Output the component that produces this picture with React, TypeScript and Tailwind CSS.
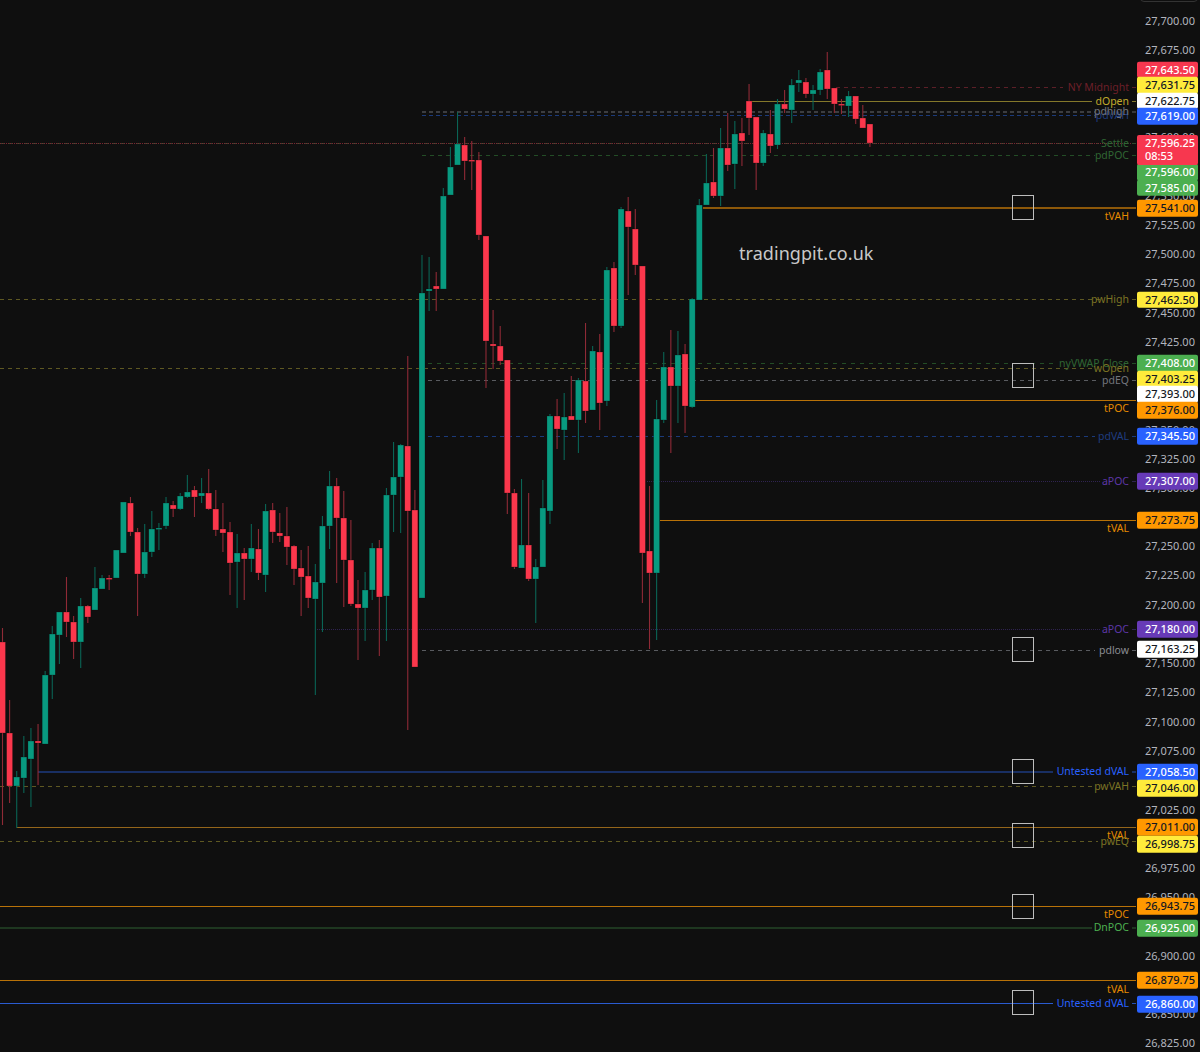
import React from "react";

type C = [number, number, number, number, number];
// [isGreen, bodyTop, bodyBottom, wickTop, wickBottom]
const candles: C[] = [
  [0,642,733,628,825],[0,733,786,700,803],[1,777,786,771,828],[1,757,778,736,793],[1,741,759,728,807],[0,741,743,724,785],
  [1,675,744,671,744],[1,634,675,626,699],[1,612,635,612,664],[0,612,622,577,637],[0,622,642,616,659],[1,606,642,598,668],
  [0,606,617,605,623],[1,588,610,567,610],[1,578,589,575,589],[0,578,579,575,590],[1,550,578,550,578],[1,502,553,502,553],
  [0,503,532,497,536],[0,532,574,528,616],[1,552,574,524,578],[1,529,552,511,557],[1,528,529,523,550],[1,503,526,497,529],
  [0,505,509,501,517],[1,496,509,493,510],[1,492,497,475,498],[0,490,497,486,517],[1,493,496,478,503],[0,493,509,469,510],
  [0,509,530,490,536],[0,529,533,503,552],[0,532,563,522,595],[1,553,562,534,608],[0,553,559,548,600],[1,548,559,524,572],
  [0,549,573,529,580],[1,511,575,504,592],[0,510,532,503,543],[0,533,536,513,542],[0,536,547,507,565],[0,546,569,545,585],
  [0,568,577,550,616],[0,576,598,546,608],[1,582,599,564,695],[1,526,583,516,632],[1,486,526,471,549],[0,486,518,478,583],
  [0,518,560,491,607],[0,560,604,520,606],[0,604,608,580,660],[1,590,608,572,641],[1,548,590,543,600],[0,548,597,540,656],
  [1,495,596,488,641],[1,477,495,442,532],[1,445,477,444,533],[0,446,511,356,730],[0,510,667,490,667],[1,293,598,255,598],
  [1,289,291,257,311],[0,286,289,272,311],[1,196,289,188,289],[1,167,195,147,195],[1,144,165,112,165],[0,145,161,137,180],
  [0,160,161,141,190],[0,160,235,152,240],[0,236,341,236,388],[0,344,346,310,369],[0,346,361,326,365],[0,360,493,360,514],
  [0,493,567,489,569],[1,545,568,479,568],[0,545,579,493,581],[1,567,579,559,623],[1,508,567,480,567],[1,416,511,414,524],
  [0,416,429,399,449],[1,417,430,393,460],[0,416,420,376,420],[1,380,420,378,453],[0,381,411,323,423],[1,351,410,346,410],
  [0,352,403,334,430],[1,270,401,267,406],[0,268,326,262,332],[1,209,326,207,328],[0,211,227,197,295],[0,229,265,209,275],
  [0,266,553,266,603],[0,551,573,486,649],[1,419,573,400,640],[1,367,420,352,423],[0,367,386,330,453],[1,355,386,331,423],
  [0,354,406,344,433],[1,299,407,298,408],[1,205,300,199,300],[1,183,205,154,205],[0,182,196,148,198],[1,148,196,128,206],
  [0,148,165,113,171],[1,134,164,121,189],[0,133,141,118,166],[0,101,118,84,135],[0,117,163,117,190],[1,133,163,130,166],
  [0,134,146,110,153],[1,104,145,99,149],[0,104,109,90,113],[1,85,110,79,123],[1,80,83,70,92],[0,82,94,78,98],
  [1,90,94,85,110],[1,72,90,69,95],[0,70,89,52,99],[0,88,104,88,113],[0,104,105,99,114],[1,96,106,91,117],
  [0,96,119,96,124],[0,118,128,105,128],[0,124,143,124,147],
];

type L = { y: number; x1: number; x2: number; c: string; w?: number; d?: string };
const lines: L[] = [
  { y: 87.5, x1: 836, x2: 1063, c: "#5c1f27", d: "4 4" },
  { y: 101.5, x1: 750, x2: 1092, c: "#84782a" },
  { y: 112, x1: 422, x2: 1095, c: "#6a6c72", d: "4 3" },
  { y: 115.5, x1: 422, x2: 1095, c: "#1b3a7a", d: "4 3" },
  { y: 143.5, x1: 0, x2: 1098, c: "#2d4a2d", d: "4 4" },
  { y: 143.5, x1: 0, x2: 1136, c: "#7a2430", d: "1 1" },
  { y: 155.5, x1: 422, x2: 1095, c: "#234d26", d: "4 4" },
  { y: 208, x1: 703, x2: 1136, c: "#b87208", w: 1.3 },
  { y: 299.5, x1: 0, x2: 1100, c: "#5e5822", d: "4 4" },
  { y: 363.5, x1: 428, x2: 1058, c: "#234d26", d: "4 5" },
  { y: 368.5, x1: 0, x2: 1095, c: "#5e5822", d: "4 4" },
  { y: 380.5, x1: 428, x2: 1100, c: "#595b60", d: "4 4" },
  { y: 400.5, x1: 693, x2: 1136, c: "#b87208" },
  { y: 436.5, x1: 428, x2: 1095, c: "#1b3a7a", d: "4 4" },
  { y: 481.5, x1: 647, x2: 1100, c: "#2f2350", d: "1 1" },
  { y: 520.5, x1: 660, x2: 1136, c: "#b87208" },
  { y: 629.5, x1: 317, x2: 1100, c: "#2f2350", d: "1 1" },
  { y: 650.5, x1: 422, x2: 1095, c: "#595b60", d: "4 4" },
  { y: 772, x1: 38, x2: 1053, c: "#2451b8", w: 1.2 },
  { y: 786.5, x1: 0, x2: 1093, c: "#5e5822", d: "4 4" },
  { y: 827.5, x1: 17, x2: 1136, c: "#94651a" },
  { y: 841.5, x1: 0, x2: 1098, c: "#5e5822", d: "4 4" },
  { y: 906.5, x1: 0, x2: 1136, c: "#b87208" },
  { y: 928, x1: 0, x2: 1092, c: "#2f6132", w: 1.2 },
  { y: 980.5, x1: 0, x2: 1136, c: "#b87208" },
  { y: 1003.5, x1: 0, x2: 1053, c: "#2a5bd0", w: 1.2 },
];

const ticks: [number, string][] = [
  [87.5, "#5c1f27"], [101.5, "#84782a"], [112, "#5f6168"], [143.5, "#2d4a2d"], [155.5, "#234d26"],
  [299.5, "#5e5822"], [363.5, "#234d26"], [380.5, "#595b60"], [436.5, "#1b3a7a"], [481.5, "#2f2350"],
  [629.5, "#2f2350"], [650.5, "#595b60"], [772, "#2451b8"], [786.5, "#5e5822"], [841.5, "#5e5822"],
  [928, "#2f6132"], [1003.5, "#2451b8"],
];

const squares = [195, 363, 637, 759, 823, 894, 990];

const labels: { t: string; y: number; cls: string }[] = [
  { t: "NY Midnight", y: 87.5, cls: "text-[#6d1f29]" },
  { t: "pdVAH", y: 116, cls: "text-[#1f3d80]" },
  { t: "dOpen", y: 101.5, cls: "text-[#c2aa2c]" },
  { t: "pdhigh", y: 112, cls: "text-[#74767e]" },
  { t: "Settle", y: 143.5, cls: "text-[#2f6634]" },
  { t: "pdPOC", y: 155.5, cls: "text-[#2f6634]" },
  { t: "tVAH", y: 217, cls: "text-[#e68a00]" },
  { t: "pwHigh", y: 299.5, cls: "text-[#7d7424]" },
  { t: "nyVWAP Close", y: 363.5, cls: "text-[#2f6634]" },
  { t: "wOpen", y: 368.5, cls: "text-[#7d7424]" },
  { t: "pdEQ", y: 380.5, cls: "text-[#74767e]" },
  { t: "tPOC", y: 409, cls: "text-[#e68a00]" },
  { t: "pdVAL", y: 436.5, cls: "text-[#1f3d80]" },
  { t: "aPOC", y: 481.5, cls: "text-[#5c36a6]" },
  { t: "tVAL", y: 529, cls: "text-[#e68a00]" },
  { t: "aPOC", y: 629.5, cls: "text-[#5c36a6]" },
  { t: "pdlow", y: 650.5, cls: "text-[#8a8c92]" },
  { t: "Untested dVAL", y: 772, cls: "text-[#2962ff]" },
  { t: "pwVAH", y: 786.5, cls: "text-[#7d7424]" },
  { t: "tVAL", y: 836, cls: "text-[#e68a00]" },
  { t: "pwEQ", y: 842, cls: "text-[#7d7424]" },
  { t: "tPOC", y: 915, cls: "text-[#e68a00]" },
  { t: "DnPOC", y: 928, cls: "text-[#4caf50]" },
  { t: "tVAL", y: 989.5, cls: "text-[#e68a00]" },
  { t: "Untested dVAL", y: 1003.5, cls: "text-[#2962ff]" },
];

const axis: [string, number][] = [
  ["27,700.00", 21], ["27,675.00", 50], ["27,600.00", 137], ["27,550.00", 196], ["27,525.00", 225],
  ["27,500.00", 254], ["27,475.00", 283], ["27,450.00", 313], ["27,425.00", 342], ["27,350.00", 430],
  ["27,325.00", 459], ["27,300.00", 488], ["27,250.00", 546], ["27,225.00", 575], ["27,200.00", 605],
  ["27,150.00", 663], ["27,125.00", 692], ["27,100.00", 722], ["27,075.00", 751], ["27,025.00", 810],
  ["26,975.00", 868], ["26,950.00", 897], ["26,900.00", 956], ["26,850.00", 1014], ["26,825.00", 1043],
];

const tagCls = {
  red: "bg-[#f7374f] text-white",
  yellow: "bg-[#ffeb3b] text-[#131722]",
  white: "bg-white text-[#131722]",
  blue: "bg-[#2962ff] text-white",
  green: "bg-[#4caf50] text-white",
  orange: "bg-[#ff9800] text-[#131722]",
  purple: "bg-[#673ab7] text-white",
};

const tags: { t: string; y: number; c: keyof typeof tagCls }[] = [
  { t: "27,643.50", y: 69.5, c: "red" },
  { t: "27,631.75", y: 85, c: "yellow" },
  { t: "27,622.75", y: 100.5, c: "white" },
  { t: "27,619.00", y: 116, c: "blue" },
  { t: "27,596.00", y: 172, c: "green" },
  { t: "27,585.00", y: 187.5, c: "green" },
  { t: "27,541.00", y: 208, c: "orange" },
  { t: "27,462.50", y: 299.5, c: "yellow" },
  { t: "27,408.00", y: 363, c: "green" },
  { t: "27,403.25", y: 379, c: "yellow" },
  { t: "27,393.00", y: 394, c: "white" },
  { t: "27,376.00", y: 410, c: "orange" },
  { t: "27,345.50", y: 436, c: "blue" },
  { t: "27,307.00", y: 481, c: "purple" },
  { t: "27,273.75", y: 520, c: "orange" },
  { t: "27,180.00", y: 629, c: "purple" },
  { t: "27,163.25", y: 649, c: "white" },
  { t: "27,058.50", y: 772, c: "blue" },
  { t: "27,046.00", y: 788, c: "yellow" },
  { t: "27,011.00", y: 827, c: "orange" },
  { t: "26,998.75", y: 844, c: "yellow" },
  { t: "26,943.75", y: 906, c: "orange" },
  { t: "26,925.00", y: 928, c: "green" },
  { t: "26,879.75", y: 980, c: "orange" },
  { t: "26,860.00", y: 1004, c: "blue" },
];

export default function App() {
  return (
    <div className="flex h-[1052px] w-[1200px] overflow-hidden bg-[#0f0f0f] font-['Noto_Sans','Liberation_Sans',sans-serif]">
      <div className="relative h-full w-[1136px]">
        <svg className="absolute inset-0" width={1136} height={1052} viewBox="0 0 1136 1052">
          {lines.map((l, i) => (
            <line key={i} x1={l.x1} x2={l.x2} y1={l.y} y2={l.y} stroke={l.c} strokeWidth={l.w ?? 1} strokeDasharray={l.d} />
          ))}
          {ticks.map(([y, c], i) => (
            <line key={i} x1={1132} x2={1136} y1={y} y2={y} stroke={c} />
          ))}
          {candles.map((c, i) => {
            const x = 2.5 + i * 7.11;
            const green = c[0] === 1;
            return (
              <g key={i}>
                <line x1={x} x2={x} y1={c[3]} y2={c[4]} stroke={green ? "#0a6455" : "#8f2a36"} strokeWidth={1.1} />
                <rect
                  x={x - 3}
                  y={c[1]}
                  width={6}
                  height={Math.max(c[2] - c[1], 1.5)}
                  fill={green ? "#089a80" : "#fb374c"}
                  stroke="#0a0a0a"
                  strokeOpacity={0.5}
                  strokeWidth={0.5}
                />
              </g>
            );
          })}
        </svg>
        {squares.map((y) => (
          <div
            key={y}
            className="absolute left-[1012px] h-[25px] w-[22px] border border-[#bdbdbd]"
            style={{ top: y }}
          />
        ))}
        {labels.map((l, i) => (
          <div
            key={i}
            className={`absolute right-[7px] -translate-y-[calc(50%+1px)] whitespace-nowrap text-[10.5px] leading-none ${l.cls}`}
            style={{ top: l.y }}
          >
            {l.t}
          </div>
        ))}
        <div className="absolute left-[739px] top-[241px] whitespace-nowrap text-[18px] leading-6 tracking-[0.05px] text-[#c8c8c8]">
          tradingpit.co.uk
        </div>
      </div>
      <div className="relative h-full w-[64px]">
        <div className="absolute left-[4px] top-[-6px] h-[8px] w-[58px] rounded border border-[#333]" />
        {axis.map(([t, y]) => (
          <div
            key={t}
            className="absolute left-[9px] -translate-y-[calc(50%+1px)] whitespace-nowrap text-[11px] leading-none text-[#b2b5be]"
            style={{ top: y }}
          >
            {t}
          </div>
        ))}
        {tags.map((g) => (
          <div
            key={g.t}
            className={`absolute left-[1px] flex h-[16.5px] w-[61px] -translate-y-1/2 items-center rounded-[2px] pb-[1px] pl-[8px] text-[11px] font-medium leading-none ${tagCls[g.c]}`}
            style={{ top: g.y }}
          >
            {g.t}
          </div>
        ))}
        <div className="absolute left-[1px] top-[135px] flex h-[30px] w-[61px] flex-col rounded-[2px] bg-[#f7374f] pl-[8px] pt-[1px] text-[11px] font-medium leading-[13px] text-white">
          <span>27,596.25</span>
          <span>08:53</span>
        </div>
      </div>
    </div>
  );
}
